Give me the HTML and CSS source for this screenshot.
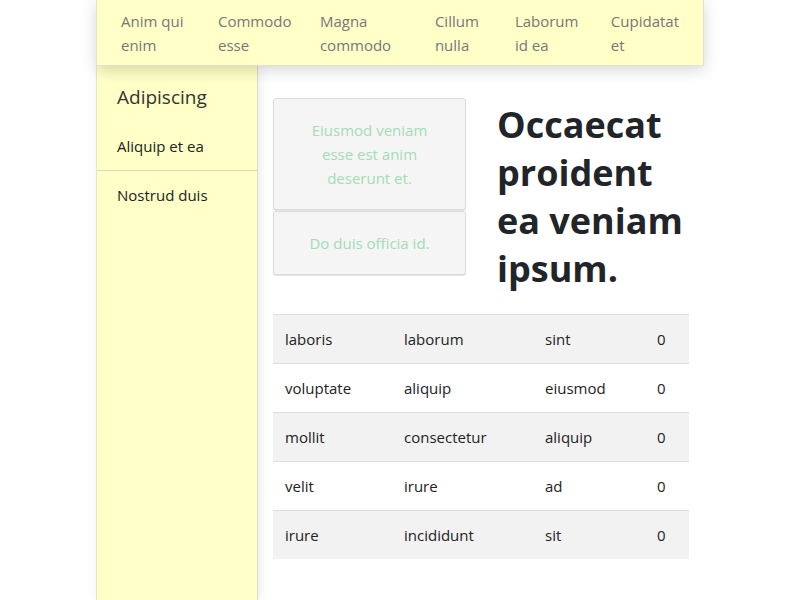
FILE: index.html
```html
<!DOCTYPE html>
<html>
<head>
<meta charset="utf-8">
<link rel="stylesheet" href="styles.css">
</head>
<body>
<div class="page">
  <nav class="topnav">
    <a class="nav-item">Anim qui<br>enim</a>
    <a class="nav-item">Commodo<br>esse</a>
    <a class="nav-item">Magna<br>commodo</a>
    <a class="nav-item">Cillum<br>nulla</a>
    <a class="nav-item">Laborum<br>id ea</a>
    <a class="nav-item">Cupidatat<br>et</a>
  </nav>
  <div class="body-row">
    <aside class="sidebar">
      <div class="side-title">Adipiscing</div>
      <div class="side-link">Aliquip et ea</div>
      <div class="side-link">Nostrud duis</div>
    </aside>
    <main class="main">
      <div class="top-row">
        <div class="cards">
          <div class="card">Eiusmod veniam esse est anim deserunt et.</div>
          <div class="card">Do duis officia id.</div>
        </div>
        <h1 class="headline">Occaecat proident ea veniam ipsum.</h1>
      </div>
      <table class="data">
        <tr><td>laboris</td><td>laborum</td><td>sint</td><td>0</td></tr>
        <tr><td>voluptate</td><td>aliquip</td><td>eiusmod</td><td>0</td></tr>
        <tr><td>mollit</td><td>consectetur</td><td>aliquip</td><td>0</td></tr>
        <tr><td>velit</td><td>irure</td><td>ad</td><td>0</td></tr>
        <tr><td>irure</td><td>incididunt</td><td>sit</td><td>0</td></tr>
      </table>
    </main>
  </div>
</div>
</body>
</html>
```

FILE: styles.css
```css
html, body {
  margin: 0;
  padding: 0;
  background: #fff;
  font-family: "Open Sans", "Noto Sans", sans-serif;
  color: #212529;
}
.page {
  width: 608px;
  margin: 0 auto;
  height: 600px;
  display: flex;
  flex-direction: column;
}
.topnav {
  position: relative;
  z-index: 2;
  flex-shrink: 0;
  display: flex;
  height: 66px;
  box-sizing: border-box;
  background: #ffffc8;
  border: 1px solid #e2e2cc;
  border-top: none;
  box-shadow: 0 4px 14px rgba(0,0,0,0.16);
  padding: 9px 0 0 24px;
}
.nav-item {
  font-size: 15px;
  line-height: 24px;
  color: #777;
  margin-right: 24px;
}
.nav-item:nth-child(1) { width: 73px; }
.nav-item:nth-child(2) { width: 78px; }
.nav-item:nth-child(3) { width: 91px; }
.nav-item:nth-child(4) { width: 56px; }
.nav-item:nth-child(5) { width: 72px; }
.body-row {
  display: flex;
  flex: 1;
  min-height: 0;
}
.sidebar {
  width: 162px;
  flex-shrink: 0;
  box-sizing: border-box;
  background: #ffffc8;
  border-right: 1px solid #dcdcc8;
  border-left: 1px solid #e6e6d0;
  box-shadow: 2px 0 10px rgba(0,0,0,0.08);
}
.side-title {
  font-size: 19px;
  line-height: 26px;
  padding: 18px 20px 12px;
  color: #333;
}
.side-link {
  font-size: 15px;
  line-height: 24px;
  padding: 12px 20px;
  color: #222;
}
.side-link + .side-link {
  border-top: 1px solid #ddd9b8;
}
.main {
  padding: 32px 0 0 15px;
  width: 416px;
}
.top-row {
  display: flex;
  align-items: flex-start;
}
.cards {
  width: 193px;
  flex-shrink: 0;
  display: flex;
  flex-direction: column;
}
.card {
  background: #f5f5f5;
  border: 1px solid #dcdcdc;
  border-radius: 3px;
  box-shadow: 0 1px 1px rgba(0,0,0,0.12);
  color: #a3dcb5;
  font-size: 15px;
  line-height: 24px;
  text-align: center;
  padding: 19px 24px;
  margin-bottom: 1px;
}
.headline {
  flex: 1;
  margin: 0 0 0 31px;
  padding-top: 3px;
  font-size: 36px;
  line-height: 48px;
  font-weight: 700;
  color: #212529;
}
.data {
  margin-top: 21px;
  width: 416px;
  border-collapse: collapse;
  font-size: 15px;
  color: #222;
}
.data td {
  height: 48px;
  padding: 0 12px;
  border-top: 1px solid #dedede;
  line-height: 24px;
}
.data tr:nth-child(odd) td { background: #f2f2f2; }
.data td:nth-child(1) { width: 95px; }
.data td:nth-child(2) { width: 117px; }
.data td:nth-child(3) { width: 88px; }
```
